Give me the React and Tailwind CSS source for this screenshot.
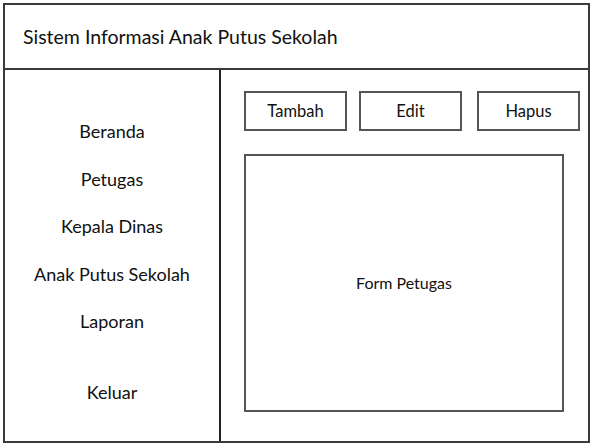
export default function App() {
  const menu = ['Beranda', 'Petugas', 'Kepala Dinas', 'Anak Putus Sekolah', 'Laporan'];

  return (
    <div className="w-[590px] h-[446px] bg-white pt-[3px] pl-[3px] text-[#111]" style={{ fontFamily: 'Lato, "Open Sans", sans-serif' }}>
      <div className="w-[587px] h-[440px] border-2 border-[#3a3a3a] flex flex-col">
        {/* header */}
        <div className="h-[65px] border-b-2 border-[#3a3a3a] flex items-center pl-[18px] text-[19.5px]">
          Sistem Informasi Anak Putus Sekolah
        </div>

        <div className="flex flex-1">
          {/* sidebar */}
          <div className="w-[216px] border-r-2 border-[#222] flex flex-col items-center pt-[38px] text-[18px]">
            {menu.map((item) => (
              <div key={item} className="h-[47.5px] flex items-center">
                {item}
              </div>
            ))}
            <div className="h-[47.5px] mt-[23px] flex items-center">Keluar</div>
          </div>

          {/* content */}
          <div className="flex-1 pl-[23px] pt-[21px]">
            <div className="flex text-[16.5px]">
              <button className="w-[103px] h-[40px] border-2 border-[#555] ml-0">Tambah</button>
              <button className="w-[103px] h-[40px] border-2 border-[#555] ml-[12px]">Edit</button>
              <button className="w-[103px] h-[40px] border-2 border-[#555] ml-[15px]">Hapus</button>
            </div>
            <div className="mt-[23px] w-[320px] h-[258px] border-2 border-[#555] flex items-center justify-center text-[16px]">
              Form Petugas
            </div>
          </div>
        </div>
      </div>
    </div>
  );
}
